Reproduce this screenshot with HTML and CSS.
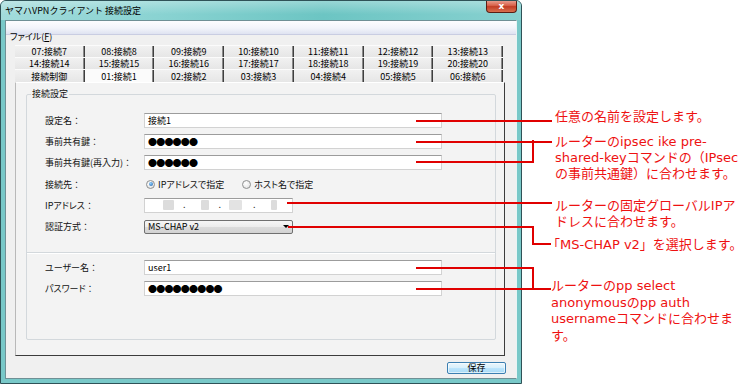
FILE: index.html
```html
<!DOCTYPE html>
<html lang="ja">
<head>
<meta charset="utf-8">
<title>ヤマハVPNクライアント 接続設定</title>
<link rel="stylesheet" href="styles.css">
</head>
<body>
<div class="page">
  <div class="window">
    <div class="titlebar">
      <span class="title">ヤマハVPNクライアント 接続設定</span>
      <span class="close">x</span>
    </div>
    <div class="frame">
      <div class="client">
        <div class="menubar"><span class="menu">ファイル(<u>F</u>)</span></div>
        <div class="body">
          <div class="tabs">
            <div class="tabrow">
              <div class="tab">07:接続7</div><div class="tab">08:接続8</div><div class="tab">09:接続9</div><div class="tab">10:接続10</div><div class="tab">11:接続11</div><div class="tab">12:接続12</div><div class="tab">13:接続13</div>
            </div>
            <div class="tabrow">
              <div class="tab">14:接続14</div><div class="tab">15:接続15</div><div class="tab">16:接続16</div><div class="tab">17:接続17</div><div class="tab">18:接続18</div><div class="tab">19:接続19</div><div class="tab">20:接続20</div>
            </div>
            <div class="tabrow last">
              <div class="tab">接続制御</div><div class="tab selected">01:接続1</div><div class="tab">02:接続2</div><div class="tab">03:接続3</div><div class="tab">04:接続4</div><div class="tab">05:接続5</div><div class="tab">06:接続6</div>
            </div>
          </div>
          <div class="panel">
            <fieldset class="group">
              <legend>接続設定</legend>
              <div class="rows">
                <div class="row"><span class="label">設定名<span class="colon">：</span></span><span class="field">接続1</span></div>
                <div class="row"><span class="label">事前共有鍵<span class="colon">：</span></span><span class="field dots">●●●●●●</span></div>
                <div class="row"><span class="label">事前共有鍵(再入力)<span class="colon">：</span></span><span class="field dots">●●●●●●</span></div>
                <div class="row"><span class="label">接続先<span class="colon">：</span></span>
                  <span class="radios">
                    <span class="radio checked"></span><span class="rlabel">IPアドレスで指定</span>
                    <span class="radio"></span><span class="rlabel">ホスト名で指定</span>
                  </span>
                </div>
                <div class="row"><span class="label">IPアドレス<span class="colon">：</span></span>
                  <span class="field short ip">
                    <span class="blur b1"></span><span class="ipdot d1">.</span><span class="blur b2"></span><span class="ipdot d2">.</span><span class="blur b3"></span><span class="ipdot d3">.</span><span class="blur b4"></span>
                  </span>
                </div>
                <div class="row"><span class="label">認証方式<span class="colon">：</span></span><span class="select"><span>MS-CHAP v2</span><span class="arrow"></span></span></div>
              </div>
              <div class="sep"></div>
              <div class="rows rows2">
                <div class="row"><span class="label">ユーザー名<span class="colon">：</span></span><span class="field">user1</span></div>
                <div class="row"><span class="label">パスワード<span class="colon">：</span></span><span class="field dots">●●●●●●●●●</span></div>
              </div>
            </fieldset>
          </div>
          <div class="footer"><button class="btn" type="button">保存</button></div>
        </div>
      </div>
    </div>
  </div>

  <svg class="lines" width="750" height="384" viewBox="0 0 750 384">
    <path d="M417 121H551"/>
    <path d="M417 142H551"/>
    <path d="M417 162H533V141"/>
    <path d="M288 203H551"/>
    <path d="M289 227H533V244H550"/>
    <path d="M417 268H533V289"/>
    <path d="M417 289H550"/>
  </svg>

  <p class="note n1">任意の名前を設定します。</p>
  <p class="note n2">ルーターのipsec ike pre-<br>shared-keyコマンドの（IPsec<br>の事前共通鍵）に合わせます。</p>
  <p class="note n3">ルーターの固定グローバルIPア<br>ドレスに合わせます。</p>
  <p class="note n4">「MS-CHAP v2」を選択します。</p>
  <p class="note n5">ルーターのpp select<br>anonymousのpp auth<br>usernameコマンドに合わせま<br>す。</p>
</div>
</body>
</html>
```

FILE: styles.css
```css
* { box-sizing: border-box; }
html, body { margin: 0; padding: 0; background: #fff; }
body { font-family: "Noto Sans CJK JP", "DejaVu Sans", sans-serif; }

.page {
  position: relative;
  width: 750px;
  height: 384px;
  overflow: hidden;
  background: #fff;
}

/* ---------- window ---------- */
.window {
  width: 522px;
  height: 384px;
  display: flex;
  flex-direction: column;
  border: 1px solid #2f5257;
  border-radius: 6px 6px 0 0;
  background: #78c8c8;
  overflow: hidden;
}
.titlebar {
  height: 19px;
  flex: none;
  display: flex;
  align-items: flex-start;
  justify-content: space-between;
  padding-left: 4px;
  background:
    linear-gradient(180deg, rgba(255,255,255,.3), rgba(255,255,255,0) 70%),
    linear-gradient(90deg, #a2dbdb 0%, #8ad3d2 30%, #6cc5c3 62%, #88d1d0 100%);
}
.title {
  font-size: 9px;
  line-height: 19px;
  color: #000;
}
.close {
  width: 31px;
  height: 13px;
  margin-top: -1px;
  margin-right: 4px;
  border: 1px solid #5a1e14;
  border-top: 0;
  border-radius: 0 0 4px 4px;
  background: linear-gradient(180deg, #eba79a 0%, #d9634c 45%, #c23d25 55%, #d8704f 100%);
  color: #fff;
  font-family: "DejaVu Sans", sans-serif;
  font-weight: bold;
  font-size: 9px;
  line-height: 12px;
  text-align: center;
}
.frame {
  flex: 1;
  display: flex;
  padding: 0 4px 4px;
}
.client {
  flex: 1;
  display: flex;
  flex-direction: column;
  border: 1px solid #6f9095;
  border-right-color: #e8f4f4;
  background: #f0f0f0;
}

/* ---------- menu ---------- */
.menubar {
  height: 14px;
  flex: none;
  padding-left: 4px;
  background: linear-gradient(180deg, #fdfdff 0%, #f2f4fa 55%, #dfe3f1 100%);
  border-bottom: 1px solid #c9cde2;
}
.menu {
  font-size: 9px;
  line-height: 13px;
  color: #000;
  font-feature-settings: "palt" 1;
}

.body {
  flex: 1;
  display: flex;
  flex-direction: column;
  padding: 10px 10px 0 9px;
}

/* ---------- tabs ---------- */
.tabs {
  width: 488px;
  display: flex;
  flex-direction: column;
}
.tabrow {
  display: flex;
  height: 12px;
  border-top: 1px solid #fbfbfb;
}
.tabrow.last { height: 13px; }
.tab {
  flex: 1;
  text-align: center;
  font-size: 9px;
  line-height: 11px;
  color: #000;
  background: linear-gradient(180deg, #f1f1f1, #e6e6e6);
  border-right: 1px solid #3f3f3f;
  box-shadow: inset -1px 0 0 #8a8a8a;
  font-feature-settings: "palt" 1;
}
.tabrow.last .tab { line-height: 13px; }
.tab.selected { background: #fbfbfb; }

/* ---------- panel ---------- */
.panel {
  width: 490px;
  border: 1px solid #3c3c3c;
  border-left-color: #b9b9b9;
  border-top-color: #fff;
  background: #f3f3f3;
  padding: 6px 8px 15px 10px;
}
.group {
  margin: 0;
  min-width: 0;
  padding: 0 0 39.5px;
  border: 1px solid #d3d8dc;
  border-radius: 2px;
}
.group legend {
  margin-left: 4px;
  padding: 0 1px;
  font-size: 9px;
  line-height: 10px;
  color: #111;
}
.rows { padding-top: 11px; }
.rows2 { padding-top: 4.5px; }
.row {
  display: grid;
  grid-template-columns: 99px 298px;
  align-items: center;
  height: 21.2px;
  padding-left: 18px;
}
.rows2 .row { height: 21px; }
.label {
  font-size: 9px;
  color: #111;
  white-space: nowrap;
  font-feature-settings: "palt" 1;
}
.colon { font-feature-settings: normal; }
.field {
  height: 15px;
  display: flex;
  align-items: center;
  padding-left: 3px;
  background: #fff;
  border: 1px solid #d2d2d2;
  border-top-color: #9c9c9c;
  font-size: 9px;
  color: #000;
  font-feature-settings: "palt" 1;
}
.field.dots {
  font-size: 9px;
  letter-spacing: -0.8px;
  font-feature-settings: normal;
}
.field.short { width: 149px; }

.blur { height: 10px; background: #dcdcdc; border-radius: 1px; }
.ipdot { font-size: 9px; line-height: 10px; color: #333; }
.b1 { width: 11px; margin-left: 15px; }
.d1 { margin-left: 9px; }
.b2 { width: 8px; margin-left: 15px; }
.d2 { margin-left: 10px; }
.b3 { width: 13px; margin-left: 8px; background: #e3e3e3; }
.d3 { margin-left: 11px; }
.b4 { width: 6px; margin-left: 15px; }

.radios {
  display: flex;
  align-items: center;
  font-size: 9px;
  color: #111;
  font-feature-settings: "palt" 1;
}
.radio {
  width: 9px;
  height: 9px;
  margin-left: 2px;
  border-radius: 50%;
  border: 1px solid #8e8f8f;
  background: radial-gradient(circle at 40% 35%, #fff, #dcdcdc);
  display: flex;
  align-items: center;
  justify-content: center;
}
.radio.checked::after {
  content: "";
  width: 4px;
  height: 4px;
  border-radius: 50%;
  background: radial-gradient(circle at 40% 35%, #8fd0ff, #1d5fa8);
}
.rlabel { margin-left: 3px; margin-right: 16px; }

.select {
  width: 149px;
  height: 14px;
  display: flex;
  align-items: center;
  justify-content: space-between;
  padding: 0 3px 0 3px;
  border: 1px solid #707070;
  border-radius: 2px;
  background: linear-gradient(180deg, #f6f6f6 0%, #ececec 50%, #dcdcdc 51%, #d2d2d2 100%);
  font-size: 9px;
  color: #000;
}
.arrow {
  width: 0;
  height: 0;
  border-left: 3px solid transparent;
  border-right: 3px solid transparent;
  border-top: 3px solid #000;
}

.sep {
  margin-top: 14.8px;
  height: 1px;
  background: #d3d8dc;
  box-shadow: 0 1px 0 #fff;
}

/* ---------- footer ---------- */
.footer {
  display: flex;
  justify-content: flex-end;
  padding-top: 6px;
}
.btn {
  width: 59px;
  height: 12px;
  margin: 0;
  padding: 0;
  border: 1px solid #3c7fb1;
  border-radius: 2px;
  background: linear-gradient(180deg, #eaf6fd 0%, #d9f0fc 45%, #bee6fd 50%, #a7d9f5 100%);
  box-shadow: inset 0 0 0 1px rgba(255,255,255,.6);
  font-family: "Noto Sans CJK JP", sans-serif;
  font-size: 9px;
  line-height: 10px;
  color: #000;
}

/* ---------- callouts ---------- */
.lines {
  position: absolute;
  left: 0;
  top: 0;
  pointer-events: none;
}
.lines path {
  fill: none;
  stroke: #e00000;
  stroke-width: 2;
  stroke-linejoin: miter;
  stroke-linecap: square;
}
.note {
  position: absolute;
  margin: 0;
  font-family: "DejaVu Sans", "Noto Sans CJK JP", sans-serif;
  font-size: 13px;
  line-height: 16px;
  color: #ee1111;
  white-space: nowrap;
}
.n1 { left: 555px; top: 109px; }
.n2 { left: 555px; top: 134px; }
.n3 { left: 555px; top: 198px; }
.n4 { left: 547px; top: 237px; }
.n5 { left: 551px; top: 278px; line-height: 16.7px; }
```
